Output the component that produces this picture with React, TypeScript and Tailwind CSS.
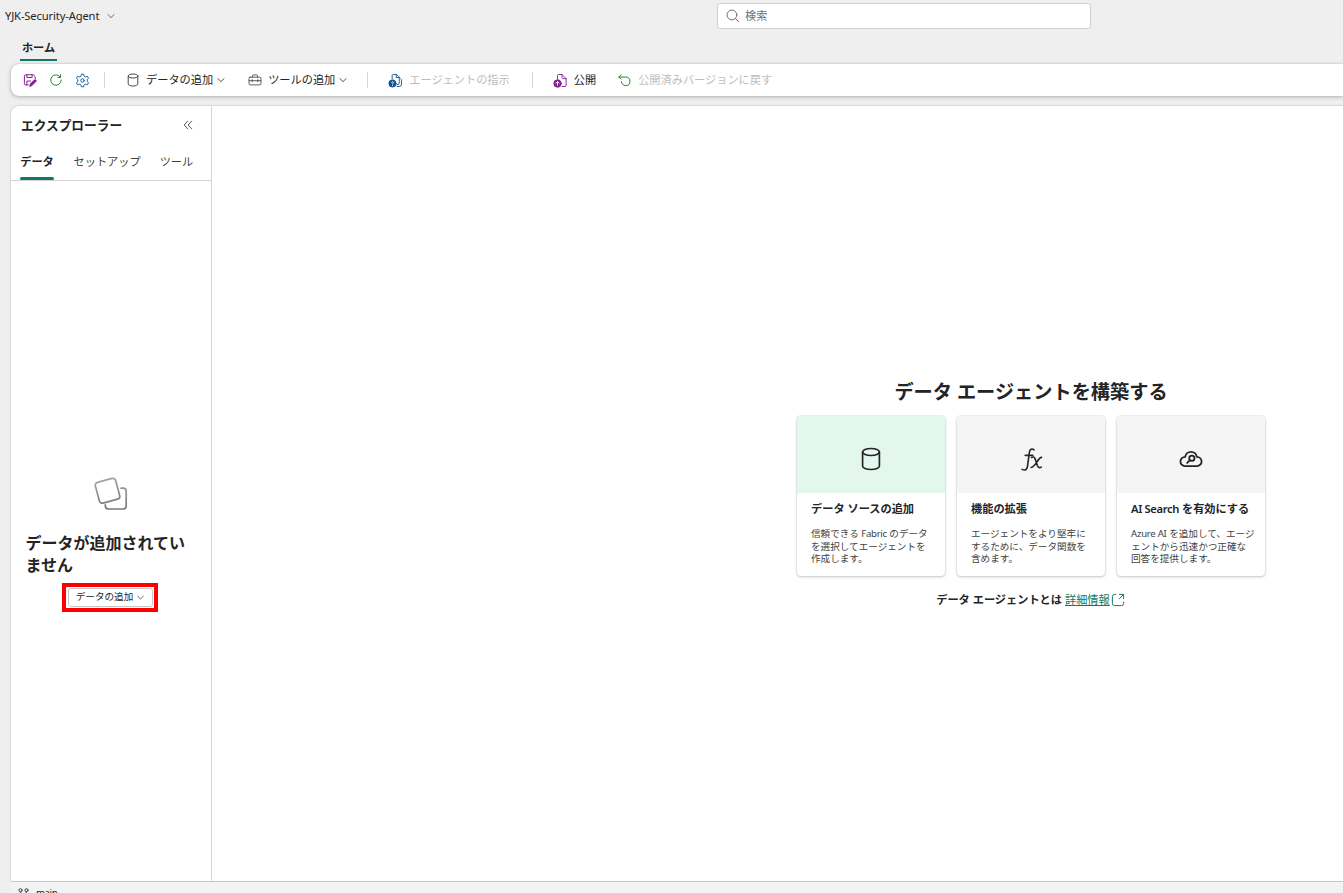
import type { ReactNode } from "react";
import clsx from "clsx";

interface IconProps {
  className?: string;
}

/* Shared 20x20 outline frame for all glyphs */
function Glyph({ className, width = 1, children }: IconProps & { width?: number; children: ReactNode }) {
  return (
    <svg
      viewBox="0 0 20 20"
      fill="none"
      stroke="currentColor"
      strokeWidth={width}
      strokeLinecap="round"
      strokeLinejoin="round"
      className={clsx("shrink-0", className)}
    >
      {children}
    </svg>
  );
}

function ChevronIcon({ className }: IconProps) {
  return (
    <Glyph className={className} width={2.3}>
      <path d="M2.200 6.500 10 14l7.800-7.500" />
    </Glyph>
  );
}

function DatabaseIcon({ className }: IconProps) {
  return (
    <Glyph className={className} width={1.2}>
      <ellipse cx="10" cy="5" rx="6" ry="2.5" />
      <path d="M4 5v10c0 1.400 2.700 2.500 6 2.500s6-1.100 6-2.500V5" />
    </Glyph>
  );
}

function SaveIcon({ className }: IconProps) {
  return (
    <Glyph className={className} width={1.4}>
      <path d="M7.500 17H4a2 2 0 0 1-2-2V4.500a2 2 0 0 1 2-2h10.500L17.500 5.500V8" />
      <path d="M5.500 2.500v4h7.500v-4M5.500 17v-5.500h5.500" />
      <path d="m9.800 18.600.7-2.900 5.600-5.600a1.500 1.500 0 0 1 2.200 2.200l-5.600 5.600z" fill="currentColor" />
    </Glyph>
  );
}

function RefreshIcon({ className }: IconProps) {
  return (
    <Glyph className={className} width={1.3}>
      <path d="M16.300 6A7.500 7.500 0 1 0 17.500 10M16.500 2.500V6.300h-3.800" />
    </Glyph>
  );
}

function GearIcon({ className }: IconProps) {
  return (
    <Glyph className={className} width={1.2}>
      <circle cx="10" cy="10" r="2.300" />
      <path d="m8.100 3.900.5-2.300h2.800l.5 2.300 2.300 1.300 2.300-.8 1.600 2.600-1.800 1.600v2.800l1.800 1.600-1.600 2.600-2.300-.8-2.300 1.300-.5 2.300H8.600l-.5-2.300-2.300-1.300-2.300.8L1.900 13l1.800-1.600V8.600L1.900 7l1.600-2.600 2.300.8z" />
    </Glyph>
  );
}

function ToolboxIcon({ className }: IconProps) {
  return (
    <Glyph className={className} width={1.2}>
      <rect x="1.500" y="6" width="17" height="11" rx="1.500" />
      <path d="M6.500 6V4A1.300 1.300 0 0 1 7.800 2.700h4.400A1.300 1.300 0 0 1 13.500 4v2M1.500 11h17M6 9.500v3M14 9.500v3" />
    </Glyph>
  );
}

function InstructionsIcon({ className }: IconProps) {
  return (
    <Glyph className={className} width={1.2}>
      <path d="M5.500 8V3.500A1.500 1.500 0 0 1 7 2h4.500L15 5.500v8.300a1.500 1.500 0 0 1-1.500 1.500H12M11 2v4h4" />
      <path d="M17 7.500c.8.500 1 1 1 2V15a3 3 0 0 1-3 3h-3" />
      <circle cx="6" cy="14" r="4.800" fill="currentColor" />
      <path d="M4.800 12.800c0-1.600 2.500-1.500 2.500 0 0 .9-1.300 1-1.300 2M6 16.700v.1" stroke="white" />
    </Glyph>
  );
}

function PublishIcon({ className }: IconProps) {
  return (
    <Glyph className={className} width={1.2}>
      <path d="M6 8V3.500A1.500 1.500 0 0 1 7.500 2H12l5.500 5.500v9A1.500 1.500 0 0 1 16 18h-4M12 2v4a1.500 1.500 0 0 0 1.500 1.500h4" />
      <circle cx="6" cy="14" r="4.900" fill="currentColor" />
      <path d="M6 16.500v-5M3.700 13.700 6 11.400 8.300 13.700" stroke="white" />
    </Glyph>
  );
}

function RevertIcon({ className }: IconProps) {
  return (
    <Glyph className={className} width={1.4}>
      <path d="M4.500 1.500 1.300 4.700 4.500 7.900M1.500 4.700h10.300a6.600 6.600 0 1 1-6.600 7" />
    </Glyph>
  );
}

function SearchIcon({ className }: IconProps) {
  return (
    <Glyph className={className} width={1.3}>
      <circle cx="8.500" cy="8.500" r="7" />
      <path d="m13.700 13.700 4.300 4.300" />
    </Glyph>
  );
}

function CollapseIcon({ className }: IconProps) {
  return (
    <Glyph className={className} width={1.5}>
      <path d="M9.500 3.500 3.700 10l5.800 6.500M16 3.500l-5.800 6.500 5.800 6.500" />
    </Glyph>
  );
}

function FunctionIcon({ className }: IconProps) {
  return (
    <Glyph className={className} width={1.3}>
      <path d="M12 2.200C10.300 1 8.700 1.600 8.300 4.200L6.800 15.500c-.4 2.700-2 3.600-4.300 2.400M5 6.700h6" />
      <path d="M10 8.400c1.300-.8 2.200-.4 2.800.9l2 5.700c.7 1.500 1.700 2 3 1.100M18 8.300c-2.800.2-4.700 7.600-8.300 8.100" />
    </Glyph>
  );
}

function CloudSearchIcon({ className }: IconProps) {
  return (
    <Glyph className={className} width={1.500}>
      <path d="M5.200 8.200a4.850 4.850 0 0 1 9.600 0 3.900 3.900 0 0 1 .2 7.800H5a3.900 3.900 0 0 1 .2-7.800z" />
      <circle cx="10.700" cy="9.400" r="2.200" />
      <path d="m9.100 11-2.300 2.300" />
    </Glyph>
  );
}

function OpenIcon({ className }: IconProps) {
  return (
    <Glyph className={className} width={1.4}>
      <path d="M7 2H5a3 3 0 0 0-3 3v10a3 3 0 0 0 3 3h10a3 3 0 0 0 3-3v-2M12 2h6v6M18 2l-6 6" />
    </Glyph>
  );
}

function BranchIcon({ className }: IconProps) {
  return (
    <Glyph className={className} width={1.8}>
      <circle cx="4.500" cy="4" r="2.800" />
      <circle cx="15.500" cy="4" r="2.800" />
      <circle cx="10" cy="16" r="2.800" />
      <path d="M4.500 6.800C4.500 9 6 10 8 10h4c2 0 3.500-1 3.500-3.200M10 10v3.200" />
    </Glyph>
  );
}

/* Two overlapping sheets for the empty state */
function EmptyIcon() {
  return (
    <svg viewBox="0 0 34 34" fill="none" strokeWidth="1.700" strokeLinecap="round" className="size-[34px]">
      <defs>
        <linearGradient id="sheet" x1="0" y1="0" x2="0" y2="34" gradientUnits="userSpaceOnUse">
          <stop stopColor="#a6a6a6" />
          <stop offset="1" stopColor="#757575" />
        </linearGradient>
      </defs>
      <rect x="3" y="3" width="21" height="21.500" rx="3" transform="rotate(-15 13.500 13.700)" stroke="url(#sheet)" />
      <path d="M27 11.200h2a3.200 3.200 0 0 1 3.200 3.200v14.400a3.200 3.200 0 0 1-3.200 3.200H14.500a3.200 3.200 0 0 1-3.200-3.200v-1" stroke="url(#sheet)" />
    </svg>
  );
}

const CARDS = [
  {
    title: "データ ソースの追加",
    lines: [<>信頼できる <span className="tracking-[-0.3px]">Fabric</span> のデータ</>, "を選択してエージェントを", "作成します。"],
    icon: <DatabaseIcon className="size-[28px]" />,
    header: "bg-[#e3f7ef]",
  },
  {
    title: "機能の拡張",
    lines: ["エージェントをより堅牢に", "するために、データ関数を", "含めます。"],
    icon: <FunctionIcon className="size-[25px]" />,
    header: "bg-[#f5f5f5]",
  },
  {
    title: (
      <>
        <span className="font-semibold tracking-[-0.350px]">AI Search</span> を有効にする
      </>
    ),
    lines: [<><span className="tracking-[-0.250px]">Azure AI</span> を追加して、エージ</>, "ェントから迅速かつ正確な", "回答を提供します。"],
    icon: <CloudSearchIcon className="size-6" />,
    header: "bg-[#f5f5f5]",
  },
];

function Divider({ className }: IconProps) {
  return <div className={clsx("h-4 w-px shrink-0 bg-[#d6d6d6]", className)} />;
}

function Toolbar() {
  return (
    <div className="ml-[11px] flex h-8 shrink-0 items-center rounded-l-lg bg-white pl-3 shadow-[0_0_1px_rgba(0,0,0,0.25),0_1px_4px_rgba(0,0,0,0.25)]">
      <SaveIcon className="size-[14px] text-[#881798]" />
      <RefreshIcon className="ml-3 size-[14px] text-[#107c10]" />
      <GearIcon className="ml-3 size-[15px] text-[#0f548c]" />
      <Divider className="ml-[14px]" />
      <DatabaseIcon className="ml-[20px] size-4 text-[#424242]" />
      <span className="ml-[5px]">データの追加</span>
      <ChevronIcon className="ml-1 size-2 text-[#424242]" />
      <ToolboxIcon className="ml-[23px] size-[14px] text-[#424242]" />
      <span className="ml-[6px]">ツールの追加</span>
      <ChevronIcon className="ml-1 size-2 text-[#424242]" />
      <Divider className="ml-[20px]" />
      <InstructionsIcon className="ml-[20px] size-[15px] text-[#0f548c]" />
      <span className="ml-[6px] text-[#bdbdbd]">エージェントの指示</span>
      <Divider className="ml-[22px]" />
      <PublishIcon className="ml-[20px] size-[15px] text-[#881798]" />
      <span className="ml-[6px]">公開</span>
      <RevertIcon className="ml-[22px] size-[13px] text-[#107c10]" />
      <span className="ml-[7px] text-[#bdbdbd]">公開済みバージョンに戻す</span>
    </div>
  );
}

function Explorer() {
  return (
    <aside className="flex w-[201px] shrink-0 flex-col border-r border-[#d6d6d6]">
      <div className="flex h-[38px] items-center justify-between pr-[17px] pl-[10px]">
        <h2 className="pt-px text-[12.7px] font-bold">エクスプローラー</h2>
        <CollapseIcon className="size-3 text-[#424242]" />
      </div>
      <div className="flex h-[37px] shrink-0 items-center border-b border-[#d1d1d1] pl-[9px] text-[#424242]">
        <div className="relative flex h-full w-[34px] items-center justify-center font-bold text-[#242424]">
          データ
          <span className="absolute inset-x-0 bottom-0 h-[3px] rounded-full bg-[#117865]" />
        </div>
        <span className="ml-[19.500px]">セットアップ</span>
        <span className="ml-[19px]">ツール</span>
      </div>
      <div className="flex flex-col items-center pt-[296px]">
        <EmptyIcon />
        <p className="mt-[21px] w-[171px] text-base leading-[22px] font-bold">
          データが追加されてい
          <br />
          ません
        </p>
        <div className="mt-[7px] -ml-[2px] flex h-[29px] w-[96px] items-center justify-center border-4 border-[#fa0000]">
          <button className="flex h-[19px] w-[85px] items-center justify-center gap-1 rounded-[3px] border border-[#c7c7c7] text-[9.6px]">
            データの追加
            <ChevronIcon className="size-[7px] text-[#424242]" />
          </button>
        </div>
      </div>
    </aside>
  );
}

function Canvas() {
  return (
    <main className="flex w-[1638px] shrink-0 flex-col items-center pt-[272px]">
      <h1 className="text-[19.2px] leading-[28px] font-bold">データ エージェントを構築する</h1>
      <div className="mt-[10px] flex gap-3">
        {CARDS.map((card, i) => (
          <div
            key={i}
            className="h-[160px] w-[148px] overflow-hidden rounded-[4px] bg-white shadow-[0_0_1.600px_rgba(0,0,0,0.2),0_1px_3px_rgba(0,0,0,0.2)]"
          >
            <div className={clsx("flex h-[77px] items-center justify-center pt-[9px]", card.header)}>{card.icon}</div>
            <h3 className="mt-2 pl-[14px] leading-4 font-bold whitespace-nowrap">{card.title}</h3>
            <p className="mt-[11px] pl-[14px] text-[9.6px] leading-[12.5px] whitespace-nowrap text-[#424242]">
              {card.lines.map((line, n) => (
                <span key={n} className="block">
                  {line}
                </span>
              ))}
            </p>
          </div>
        ))}
      </div>
      <div className="mt-4 -ml-px flex items-center leading-4 font-bold">
        データ エージェントとは
        <a className="ml-[3px] font-normal text-[#117865] underline">詳細情報</a>
        <OpenIcon className="ml-px size-[14px] text-[#117865]" />
      </div>
    </main>
  );
}

export default function App() {
  return (
    <div className="flex h-[893px] w-[1343px] flex-col overflow-hidden bg-[#efefef] font-['Noto_Sans','Noto_Sans_CJK_JP',sans-serif] text-[11.2px] whitespace-nowrap text-[#242424]">
      <header className="flex h-8 shrink-0 items-center pl-[5px]">
        <span className="w-[102px] tracking-[-0.140px]">YJK-Security-Agent</span>
        <ChevronIcon className="size-2 text-[#616161]" />
        <div className="ml-[602px] flex h-[26px] w-[374px] items-center rounded-[3px] border border-[#d1d1d1] bg-white pl-2 text-[#707070]">
          <SearchIcon className="mr-[5px] size-[14px] text-[#616161]" />
          検索
        </div>
      </header>
      <nav className="flex h-8 shrink-0 pb-[3px] pl-5">
        <div className="flex w-[37px] items-center justify-center border-b-2 border-[#117865] pt-[5px] font-bold">
          ホーム
        </div>
      </nav>
      <Toolbar />
      <div className="mt-[10px] ml-[11px] flex h-[775px] shrink-0 rounded-tl-lg bg-white shadow-[0_0_2px_rgba(0,0,0,0.3)]">
        <Explorer />
        <Canvas />
      </div>
      <footer className="ml-[11px] flex h-6 shrink-0 items-center border-t border-[#c7c7c7] bg-[#f3f3f3] pl-[7px] text-[9.6px]">
        <BranchIcon className="size-[11px] text-[#424242]" />
        <span className="ml-[7px] tracking-[-0.400px]">main</span>
      </footer>
    </div>
  );
}
